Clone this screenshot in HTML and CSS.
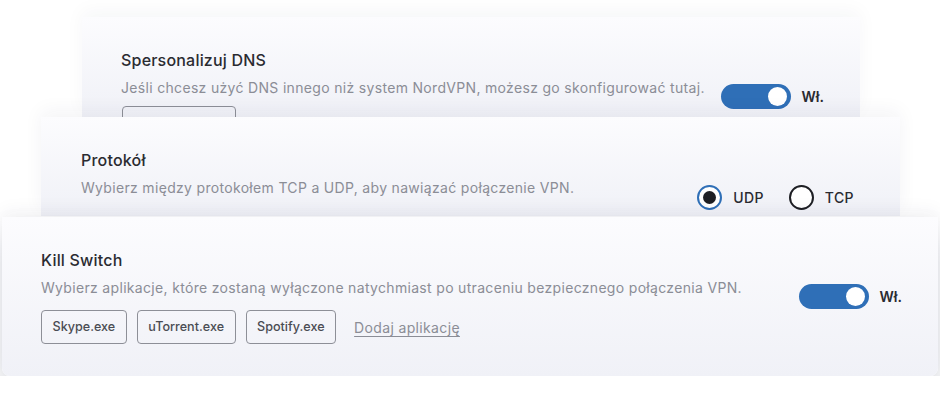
FILE: index.html
```html
<!DOCTYPE html>
<html lang="pl">
<head>
  <meta charset="UTF-8" />
  <title>Ustawienia NordVPN</title>
  <link rel="stylesheet" href="styles.css">
</head>
<body>
  <div class="stack">
    <div class="card card-back">
      <div class="card-text">
        <h2>Spersonalizuj DNS</h2>
        <p>Jeśli chcesz użyć DNS innego niż system NordVPN, możesz go skonfigurować tutaj.</p>
        <div class="chips">
          <span class="chip chip-wide"></span>
        </div>
      </div>
      <div class="control">
        <span class="toggle on"><span class="knob"></span></span>
        <span class="control-label">Wł.</span>
      </div>
    </div>

    <div class="card card-mid">
      <div class="card-text">
        <h2>Protokół</h2>
        <p>Wybierz między protokołem TCP a UDP, aby nawiązać połączenie VPN.</p>
      </div>
      <div class="control radios">
        <label class="radio checked"><span class="dot"></span>UDP</label>
        <label class="radio"><span class="dot"></span>TCP</label>
      </div>
    </div>

    <div class="card card-front">
      <div class="card-text">
        <h2>Kill Switch</h2>
        <p>Wybierz aplikacje, które zostaną wyłączone natychmiast po utraceniu bezpiecznego połączenia VPN.</p>
        <div class="chips">
          <span class="chip">Skype.exe</span>
          <span class="chip">uTorrent.exe</span>
          <span class="chip">Spotify.exe</span>
          <a class="add-link" href="#">Dodaj aplikację</a>
        </div>
      </div>
      <div class="control">
        <span class="toggle on"><span class="knob"></span></span>
        <span class="control-label">Wł.</span>
      </div>
    </div>
  </div>
</body>
</html>
```

FILE: styles.css
```css
body {
  margin: 0;
  background: #ffffff;
  font-family: Inter, "Noto Sans", sans-serif;
  color: #2a2b31;
}
.stack {
  display: flex;
  flex-direction: column;
  padding-top: 17px;
}
.card {
  display: flex;
  justify-content: space-between;
  align-items: flex-start;
  box-sizing: border-box;
  padding: 0 36px 0 39px;
  overflow: hidden;
  background: linear-gradient(180deg, #fcfcfe 0%, #f0f1f7 100%);
}
.card-back {
  margin: 0 80px 0 82px;
  height: 100px;
  box-shadow: 0 -6px 18px rgba(30, 40, 80, 0.04);
}
.card-mid {
  margin: 0 40px 0 41px;
  height: 99px;
  padding-left: 40px;
  padding-right: 46px;
  position: relative;
  box-shadow: 0 -6px 18px rgba(30, 40, 80, 0.05);
}
.card-front {
  margin: 1px 2px 0 2px;
  height: 159px;
  border-radius: 0 0 8px 8px;
  position: relative;
  box-shadow: 0 20px 30px rgba(30, 40, 80, 0.17), 0 -6px 18px rgba(30, 40, 80, 0.05);
}
.card-text h2 {
  margin: 32px 0 0;
  font-size: 16px;
  font-weight: 500;
  line-height: 22px;
  letter-spacing: 0.2px;
  color: #2a2b31;
}
.card-text p {
  margin: 7px 0 0;
  font-size: 14px;
  line-height: 20px;
  color: #8b8d96;
  letter-spacing: 0.32px;
}
.chips {
  display: flex;
  align-items: center;
  gap: 10px;
  margin-top: 12px;
}
.card-back .chips {
  margin-top: 8px;
}
.chip {
  display: inline-block;
  padding: 0 10.5px;
  height: 34px;
  line-height: 32px;
  box-sizing: border-box;
  border: 1px solid #8d8f97;
  border-radius: 4px;
  font-size: 12.6px;
  font-weight: 500;
  color: #4a4c53;
}
.chip-wide {
  width: 114px;
  margin-left: 1px;
}
.add-link {
  margin-left: 8px;
  font-size: 14px;
  letter-spacing: 0.35px;
  color: #8b8d96;
  text-decoration: underline;
  text-underline-offset: 3px;
}
.control {
  display: flex;
  align-items: center;
  gap: 11px;
  margin-top: 67px;
}
.toggle {
  display: inline-block;
  position: relative;
  width: 70px;
  height: 25px;
  border-radius: 13px;
  background: #2f6fb7;
}
.toggle .knob {
  position: absolute;
  top: 3px;
  right: 4px;
  width: 19px;
  height: 19px;
  border-radius: 50%;
  background: #ffffff;
}
.control-label {
  font-size: 14px;
  font-weight: 600;
  color: #2a2b31;
}
.radios {
  gap: 25px;
  margin-top: 68px;
}
.radio {
  display: flex;
  align-items: center;
  gap: 11px;
  font-size: 14px;
  font-weight: 500;
  letter-spacing: 0.4px;
  color: #2a2b31;
}
.radio .dot {
  display: flex;
  align-items: center;
  justify-content: center;
  width: 25px;
  height: 25px;
  box-sizing: border-box;
  border: 2px solid #1e1f24;
  border-radius: 50%;
  background: #ffffff;
}
.radio.checked .dot {
  border-color: #2f6fb7;
}
.radio.checked .dot::after {
  content: "";
  width: 13px;
  height: 13px;
  border-radius: 50%;
  background: #1e1f24;
}
```
